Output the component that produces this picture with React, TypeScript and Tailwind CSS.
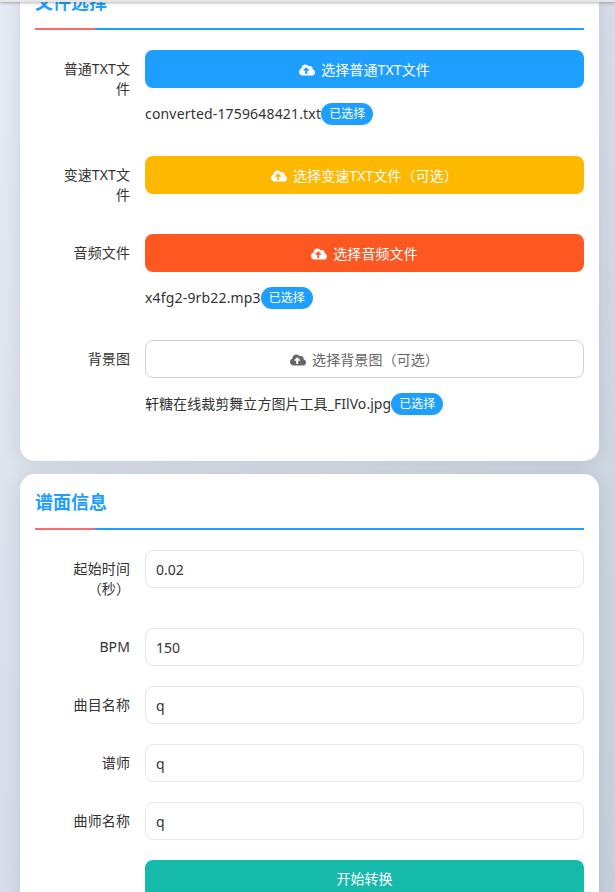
import React from 'react';
import { FaCloudUploadAlt } from 'react-icons/fa';

const fontStack = "font-['Noto_Sans','Noto_Sans_CJK_SC',sans-serif]";

const SectionTitle = ({ title }: { title: string }) => (
  <div className="relative mb-5 border-b-2 border-[#1e9fff] pb-2">
    <h2 className="text-lg leading-[36px] font-bold text-[#1e9fff]">{title}</h2>
    <span className="absolute bottom-[-2px] left-0 h-[2px] w-[60px] bg-[#ff6b6b]" />
  </div>
);

const Row = ({ label, children }: { label: string; children: React.ReactNode }) => (
  <div className="mb-5 flex">
    <label className="w-[95px] shrink-0 py-[9px] pl-[15px] text-right text-sm leading-5 tracking-[0.1px] text-[#333]">{label}</label>
    <div className="ml-[15px] min-w-0 flex-1">{children}</div>
  </div>
);

const UploadButton = ({ text, className }: { text: string; className: string }) => (
  <button className={`flex h-[38px] w-full items-center justify-center gap-[6px] rounded-lg pt-px text-sm tracking-[0.1px] ${className}`}>
    <FaCloudUploadAlt className="text-base" />
    {text}
  </button>
);

const Picked = ({ name, className }: { name: string; className?: string }) => (
  <div className="flex h-[48px] items-start pt-[15px] text-sm leading-[22px] text-[#333]">
    <span className={className}>{name}</span>
    <span className="h-[22px] rounded-full bg-[#1e9fff] px-2 text-xs leading-[22px] text-white">已选择</span>
  </div>
);

const TextInput = ({ value }: { value: string }) => (
  <input
    readOnly
    value={value}
    className="h-[38px] w-full rounded-lg border border-[#e6e6e6] bg-white px-[10px] text-sm text-[#333] outline-none"
  />
);

export default function App() {
  return (
    <div className={`relative h-[892px] overflow-hidden bg-gradient-to-br from-[#e6ebf4] to-[#c8d0de] ${fontStack}`}>
      <div className="absolute inset-x-0 top-0 z-10 h-[2px] bg-[#e6e6e6] shadow-[0_1px_3px_rgba(0,0,0,0.35)]" />
      <div className="mt-[-26px] mr-4 ml-5 flex flex-col gap-[13px]">
        <section className="rounded-[15px] bg-white p-[15px] pt-[10px] shadow-[0_0_20px_rgba(0,0,0,0.1)]">
          <SectionTitle title="文件选择" />
          <Row label="普通TXT文件">
            <UploadButton text="选择普通TXT文件" className="bg-[#1e9fff] text-white" />
            <Picked name="converted-1759648421.txt" className="tracking-[0.17px]" />
          </Row>
          <Row label="变速TXT文件">
            <UploadButton text="选择变速TXT文件（可选）" className="bg-[#ffb800] text-white" />
          </Row>
          <Row label="音频文件">
            <UploadButton text="选择音频文件" className="bg-[#ff5722] text-white" />
            <Picked name="x4fg2-9rb22.mp3" className="tracking-[0.17px]" />
          </Row>
          <Row label="背景图">
            <UploadButton text="选择背景图（可选）" className="border border-[#d2d2d2] bg-white text-[#666]" />
            <Picked name="轩糖在线裁剪舞立方图片工具_FIlVo.jpg" className="tracking-[0.05px]" />
          </Row>
        </section>
        <section className="rounded-[15px] bg-white p-[15px] pt-[10px] shadow-[0_0_20px_rgba(0,0,0,0.1)]">
          <SectionTitle title="谱面信息" />
          <Row label="起始时间（秒）">
            <TextInput value="0.02" />
          </Row>
          <Row label="BPM">
            <TextInput value="150" />
          </Row>
          <Row label="曲目名称">
            <TextInput value="q" />
          </Row>
          <Row label="谱师">
            <TextInput value="q" />
          </Row>
          <Row label="曲师名称">
            <TextInput value="q" />
          </Row>
          <Row label="">
            <button className="h-[38px] w-full rounded-lg bg-[#16baaa] text-sm text-white">开始转换</button>
          </Row>
        </section>
      </div>
    </div>
  );
}
